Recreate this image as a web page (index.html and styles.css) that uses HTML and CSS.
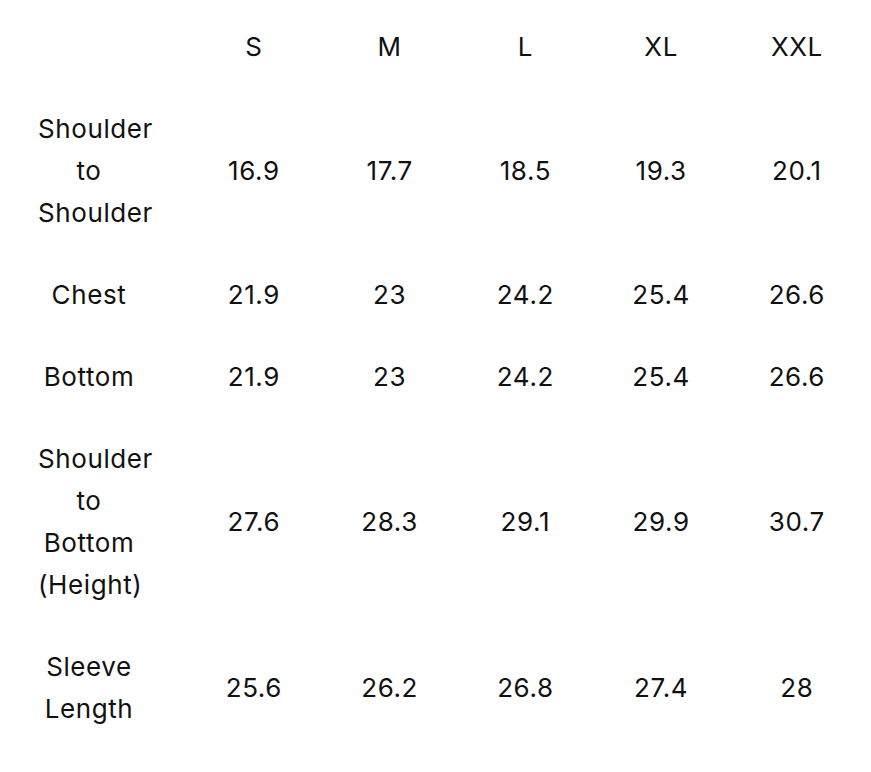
FILE: index.html
```html
<!DOCTYPE html>
<html lang="en">
<head>
<meta charset="utf-8">
<title>Size chart</title>
<link rel="stylesheet" href="styles.css">
</head>
<body>
<div class="chart">
  <div class="cell label"><span class="label-text"></span></div>
  <div class="cell">S</div>
  <div class="cell">M</div>
  <div class="cell">L</div>
  <div class="cell">XL</div>
  <div class="cell">XXL</div>

  <div class="cell label"><span class="label-text">Shoulder to Shoulder</span></div>
  <div class="cell">16.9</div>
  <div class="cell">17.7</div>
  <div class="cell">18.5</div>
  <div class="cell">19.3</div>
  <div class="cell">20.1</div>

  <div class="cell label"><span class="label-text">Chest</span></div>
  <div class="cell">21.9</div>
  <div class="cell">23</div>
  <div class="cell">24.2</div>
  <div class="cell">25.4</div>
  <div class="cell">26.6</div>

  <div class="cell label"><span class="label-text">Bottom</span></div>
  <div class="cell">21.9</div>
  <div class="cell">23</div>
  <div class="cell">24.2</div>
  <div class="cell">25.4</div>
  <div class="cell">26.6</div>

  <div class="cell label"><span class="label-text">Shoulder to Bottom (Height)</span></div>
  <div class="cell">27.6</div>
  <div class="cell">28.3</div>
  <div class="cell">29.1</div>
  <div class="cell">29.9</div>
  <div class="cell">30.7</div>

  <div class="cell label"><span class="label-text">Sleeve Length</span></div>
  <div class="cell">25.6</div>
  <div class="cell">26.2</div>
  <div class="cell">26.8</div>
  <div class="cell">27.4</div>
  <div class="cell">28</div>
</div>
</body>
</html>
```
FILE: styles.css
```css
html, body {
  margin: 0;
  padding: 0;
  background: #ffffff;
}
body {
  font-family: Inter, "Liberation Sans", sans-serif;
  font-size: 26px;
  letter-spacing: 0.6px;
  color: #111111;
}
.chart {
  display: grid;
  grid-template-columns: 186px repeat(5, 135.75px);
  padding-top: 6px;
}
.cell {
  display: flex;
  align-items: center;
  justify-content: center;
  text-align: center;
  line-height: 42px;
  padding: 20px 0;
}
.label {
  justify-content: flex-start;
  padding-left: 38px;
}
.label-text {
  display: block;
  width: 102px;
  text-align: center;
}
```
